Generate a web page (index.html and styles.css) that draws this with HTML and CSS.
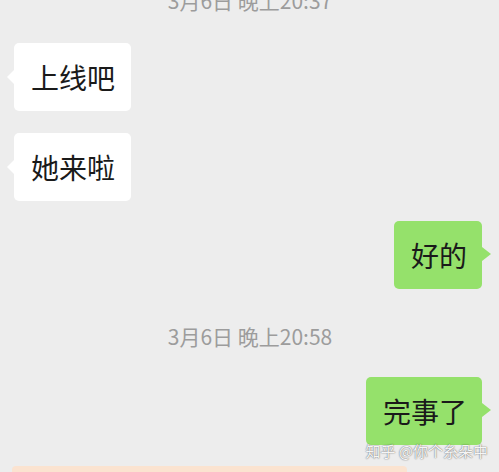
FILE: index.html
```html
<!DOCTYPE html>
<html lang="zh">
<head>
<meta charset="utf-8">
<title>Chat</title>
<link rel="stylesheet" href="styles.css">
</head>
<body>
<div class="screen">
  <div class="chat">
    <div class="time first">3月6日 晚上20:37</div>
    <div class="row left"><div class="bubble in">上线吧</div></div>
    <div class="row left gap-s"><div class="bubble in">她来啦</div></div>
    <div class="row right gap-s2"><div class="bubble out">好的</div></div>
    <div class="time second">3月6日 晚上20:58</div>
    <div class="row right gap-m"><div class="bubble out">完事了</div></div>
    <div class="strip"></div>
  </div>
  <div class="watermark">知乎 @你个糸朵中</div>
</div>
</body>
</html>
```
FILE: styles.css
```css
html, body {
  margin: 0;
  padding: 0;
  background: #ededed;
}
.screen {
  position: relative;
  width: 499px;
  height: 472px;
  overflow: hidden;
  background: #ededed;
  font-family: "Noto Sans CJK SC", "Noto Sans", sans-serif;
}
.chat {
  display: flex;
  flex-direction: column;
  padding: 0 17px 0 14px;
}
.time {
  text-align: center;
  font-size: 21px;
  line-height: 24px;
  color: #9c9c9c;
  padding-left: 4px;
}
.time.first {
  margin-top: -12px;
}
.time.second {
  margin-top: 35px;
}
.row {
  display: flex;
  margin-top: 31px;
}
.row.left { justify-content: flex-start; }
.row.right { justify-content: flex-end; }
.row.gap-s { margin-top: 22px; }
.row.gap-s2 { margin-top: 20px; }
.row.gap-m { margin-top: 29px; }
.bubble {
  position: relative;
  font-size: 28px;
  line-height: 36px;
  padding: 16px 16px 16px 17px;
  border-radius: 5px;
  color: #1a1a1a;
}
.bubble.in {
  background: #ffffff;
}
.bubble.out {
  background: #95e16b;
  padding-right: 15px;
}
.bubble.in::before {
  content: "";
  position: absolute;
  left: -7px;
  top: 27px;
  border-top: 7.5px solid transparent;
  border-bottom: 7.5px solid transparent;
  border-right: 7px solid #ffffff;
}
.bubble.out::after {
  content: "";
  position: absolute;
  right: -9px;
  top: 26px;
  border-top: 7.5px solid transparent;
  border-bottom: 7.5px solid transparent;
  border-left: 9px solid #95e16b;
}
.strip {
  margin-top: 21px;
  margin-left: -2px;
  width: 395px;
  height: 8px;
  background: #fbe3d0;
  border-radius: 4px 4px 0 0;
}
.watermark {
  position: absolute;
  right: 11px;
  top: 441px;
  font-size: 15px;
  line-height: 20px;
  color: rgba(255, 255, 255, 0.95);
  text-shadow: 0 0 1px rgba(0, 0, 0, 0.55), 0 0 2px rgba(0, 0, 0, 0.3);
  white-space: nowrap;
}
```
